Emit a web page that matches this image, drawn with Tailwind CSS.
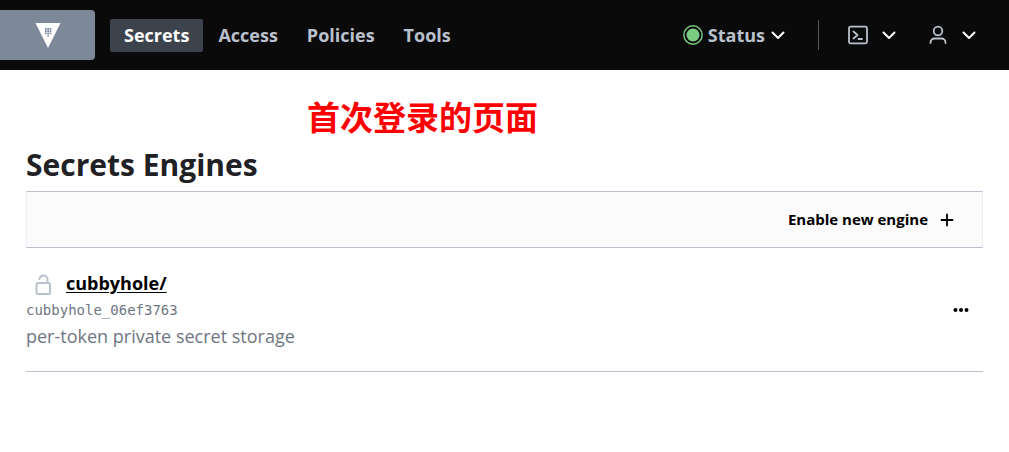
<!DOCTYPE html>
<html lang="en">
<head>
<meta charset="utf-8">
<meta name="viewport" content="width=device-width, initial-scale=1">
<title>Secrets Engines</title>
<script src="https://cdn.jsdelivr.net/npm/@tailwindcss/browser@4"></script>
</head>
<body class="bg-white font-['Open_Sans','Noto_Sans_CJK_SC',sans-serif] text-[#1f2124]">
<header class="flex h-[70px] items-center bg-[#0a0a0a] text-lg font-bold text-[#bac1cc]">
  <a href="#" aria-label="Home" class="flex h-[50px] w-[95px] shrink-0 items-center justify-center rounded-r bg-[#7d8998]">
    <svg class="h-[26px] w-[26px]" viewBox="0 0 26 26">
      <path fill="#fff" d="M.5 1h25L13 26z"/>
      <path fill="#7d8998" d="M10 6h1.700v1.700H10zm2.300 0H14v1.700h-1.700zm2.300 0h1.700v1.700h-1.700zM10 8.300h1.700V10H10zm2.300 0H14V10h-1.700zm2.300 0h1.700V10h-1.700zM10 10.600h1.700v1.700H10zm2.300 0H14v1.700h-1.700zm2.300 0h1.700v1.700h-1.700zM12.300 12.900H14v1.700h-1.700z"/>
    </svg>
  </a>
  <nav class="ml-[15px] flex gap-px leading-[33px]">
    <a href="#" class="rounded-xs bg-[#3d434c] px-[14px] text-white">Secrets</a>
    <a href="#" class="px-[14px]">Access</a>
    <a href="#" class="px-[14px]">Policies</a>
    <a href="#" class="px-[14px]">Tools</a>
  </nav>
  <div class="mr-[33px] ml-auto flex items-center">
    <button class="flex items-center">
      <svg class="mr-[5px] size-5" viewBox="0 0 20 20"><circle cx="10" cy="10" r="9.200" fill="none" stroke="#7acc81" stroke-width="1.400"/><circle cx="10" cy="10" r="6.500" fill="#7acc81"/></svg>
      Status
      <svg class="ml-[6px] h-4 w-[14px]" viewBox="0 0 14 16" fill="none" stroke="#fff" stroke-width="2" stroke-linecap="round" stroke-linejoin="round"><path d="M1.500 5.500 7 11l5.500-5.500"/></svg>
    </button>
    <span class="mr-[29px] ml-[33px] h-[30px] w-px bg-[#525761]"></span>
    <button aria-label="Console" class="flex items-center">
      <svg class="size-5" viewBox="0 0 20 20" fill="none" stroke="#bac1cc" stroke-width="1.800" stroke-linecap="round" stroke-linejoin="round"><rect x="1" y="1.700" width="18" height="16.600" rx="1.500"/><path d="m5.500 6.500 4 3.500-4 3.500M10.500 14H14"/></svg>
      <svg class="ml-[14px] h-4 w-[14px]" viewBox="0 0 14 16" fill="none" stroke="#fff" stroke-width="2" stroke-linecap="round" stroke-linejoin="round"><path d="M1.500 5.500 7 11l5.500-5.500"/></svg>
    </button>
    <button aria-label="User" class="ml-8 flex items-center">
      <svg class="size-5" viewBox="0 0 20 20" fill="none" stroke="#bac1cc" stroke-width="1.800" stroke-linecap="round"><circle cx="10" cy="6" r="4.300"/><path d="M2.500 18v-.5a4 4 0 0 1 4-4h7a4 4 0 0 1 4 4v.5"/></svg>
      <svg class="ml-[14px] h-4 w-[14px]" viewBox="0 0 14 16" fill="none" stroke="#fff" stroke-width="2" stroke-linecap="round" stroke-linejoin="round"><path d="M1.500 5.500 7 11l5.500-5.500"/></svg>
    </button>
  </div>
</header>
<main class="px-[26px] pt-6">
  <p lang="zh-CN" class="pl-[281px] text-[33px] leading-12 font-bold text-[#ff0000]">首次登录的页面</p>
  <h1 class="pb-1 text-[30px] leading-[45px] font-bold">Secrets Engines</h1>
  <div class="flex h-[57px] items-center justify-end border border-x-[#ebeef2] border-y-[#bac1cc] bg-[#fbfbfb] pr-7">
    <a href="#" class="flex items-center gap-3 text-[15px] font-bold text-black">Enable new engine
      <svg class="size-[14px]" viewBox="0 0 14 14" stroke="#000" stroke-width="1.800" stroke-linecap="round"><path d="M7 1.500v11M1.500 7h11"/></svg>
    </a>
  </div>
  <div class="flex items-center justify-between border-b border-[#bac1cc] pt-[21px] pr-[14px] pb-[21px] text-lg">
    <div>
      <a href="#" class="flex items-center pl-2 leading-7 font-bold text-black">
        <svg class="mt-1 mr-[14px] h-[22px] w-[18px]" viewBox="0 0 18 22" fill="none" stroke="#bac1cc" stroke-width="2" stroke-linecap="round" stroke-linejoin="round"><rect x="2.500" y="9" width="13.500" height="11" rx="1.500"/><path d="M5.500 5a4 4 0 0 1 8 1v3"/></svg>
        <span class="underline underline-offset-2">cubbyhole/</span>
      </a>
      <code class="block pt-px font-['DejaVu_Sans_Mono',monospace] text-sm leading-6 text-[#6f7682]">cubbyhole_06ef3763</code>
      <p class="leading-7 text-[#6f7682]">per-token private secret storage</p>
    </div>
    <button aria-label="More options"><svg class="h-4 w-4" viewBox="0 0 16 16"><circle cx="2.500" cy="8" r="2"/><circle cx="8" cy="8" r="2"/><circle cx="13.500" cy="8" r="2"/></svg></button>
  </div>
</main>
</body>
</html>
